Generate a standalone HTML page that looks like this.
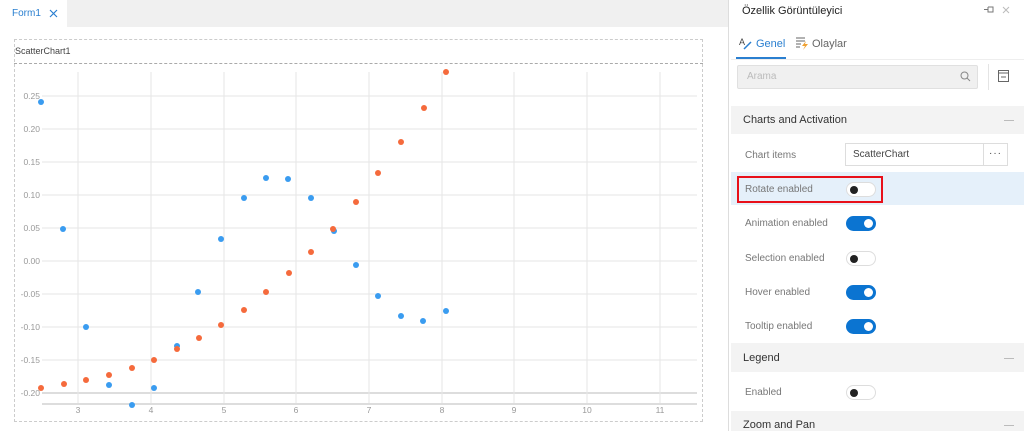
<!DOCTYPE html><html><head><style>
body{margin:0;width:1024px;height:431px;overflow:hidden;background:#fff;font-family:"Liberation Sans",sans-serif;position:relative}
.a{position:absolute}
.lbl{position:absolute;left:745px;font-size:10px;color:#777}
.tg{position:absolute;left:846px;width:30px;height:15px;border-radius:8px;box-sizing:border-box}
.off{border:1px solid #ddd;background:#fff}.off:after{content:"";position:absolute;left:3px;top:3px;width:8px;height:8px;border-radius:50%;background:#222}
.on{background:#0b74d1}.on:after{content:"";position:absolute;right:3px;top:3px;width:9px;height:9px;border-radius:50%;background:#fff}
.sec{position:absolute;left:731px;width:293px;background:#f3f3f3;font-size:11px;color:#333}
.sec span{position:absolute;left:12px}
.sec i{position:absolute;right:10px;top:50%;width:10px;border-top:1px solid #bbb}
</style></head><body>
<div class="a" style="left:0;top:0;width:729px;height:27px;background:#f0f0f0"></div>
<div class="a" style="left:0;top:0;width:67px;height:27px;background:#fff"></div>
<div class="a" style="left:12px;top:8px;font-size:10px;color:#2a7fd0">Form1</div>
<svg class="a" style="left:49px;top:9px" width="9" height="9"><path d="M1 1L8 8M8 1L1 8" stroke="#2a7fd0" stroke-width="1.2"/></svg>
<div class="a" style="left:14px;top:39px;width:689px;height:383px;border:1px dashed #ccc;box-sizing:border-box"></div>
<div class="a" style="left:14px;top:63px;width:689px;border-top:1px dashed #aaa"></div>
<div class="a" style="left:15px;top:46px;font-size:9px;color:#444">ScatterChart1</div>
<div class="a" style="left:728px;top:0;width:1px;height:431px;background:#ddd"></div>
<svg class="a" style="left:0;top:0" width="729" height="431">
<g stroke="#e6e6e6" stroke-width="1">
<line x1="42" x2="697" y1="96" y2="96"/><line x1="42" x2="697" y1="129" y2="129"/><line x1="42" x2="697" y1="162" y2="162"/><line x1="42" x2="697" y1="195" y2="195"/><line x1="42" x2="697" y1="228" y2="228"/><line x1="42" x2="697" y1="261" y2="261"/><line x1="42" x2="697" y1="294" y2="294"/><line x1="42" x2="697" y1="327" y2="327"/><line x1="42" x2="697" y1="360" y2="360"/><line x1="42" x2="697" y1="393" y2="393" stroke="#ddd" stroke-width="2"/>
<line x1="78" x2="78" y1="72" y2="404"/><line x1="151" x2="151" y1="72" y2="404"/><line x1="224" x2="224" y1="72" y2="404"/><line x1="296" x2="296" y1="72" y2="404"/><line x1="369" x2="369" y1="72" y2="404"/><line x1="442" x2="442" y1="72" y2="404"/><line x1="514" x2="514" y1="72" y2="404"/><line x1="587" x2="587" y1="72" y2="404"/><line x1="660" x2="660" y1="72" y2="404"/>
<line x1="42" x2="697" y1="404" y2="404" stroke="#ddd" stroke-width="2"/>
</g>
<g font-size="8.5" fill="#999" text-anchor="end" font-family="Liberation Sans">
<text x="40" y="99">0.25</text><text x="40" y="132">0.20</text><text x="40" y="165">0.15</text><text x="40" y="198">0.10</text><text x="40" y="231">0.05</text><text x="40" y="264">0.00</text><text x="40" y="297">-0.05</text><text x="40" y="330">-0.10</text><text x="40" y="363">-0.15</text><text x="40" y="396">-0.20</text></g>
<g font-size="8.5" fill="#999" text-anchor="middle" font-family="Liberation Sans">
<text x="78" y="413">3</text><text x="151" y="413">4</text><text x="224" y="413">5</text><text x="296" y="413">6</text><text x="369" y="413">7</text><text x="442" y="413">8</text><text x="514" y="413">9</text><text x="587" y="413">10</text><text x="660" y="413">11</text></g>
<g fill="#3a9cf0">
<circle cx="41" cy="102" r="3"/><circle cx="63" cy="229" r="3"/><circle cx="86" cy="327" r="3"/><circle cx="109" cy="385" r="3"/><circle cx="132" cy="405" r="3"/><circle cx="154" cy="388" r="3"/><circle cx="177" cy="346" r="3"/><circle cx="198" cy="292" r="3"/><circle cx="221" cy="239" r="3"/><circle cx="244" cy="198" r="3"/><circle cx="266" cy="178" r="3"/><circle cx="288" cy="179" r="3"/><circle cx="311" cy="198" r="3"/><circle cx="334" cy="231" r="3"/><circle cx="356" cy="265" r="3"/><circle cx="378" cy="296" r="3"/><circle cx="401" cy="316" r="3"/><circle cx="423" cy="321" r="3"/><circle cx="446" cy="311" r="3"/></g>
<g fill="#f56a3c">
<circle cx="41" cy="388" r="3"/><circle cx="64" cy="384" r="3"/><circle cx="86" cy="380" r="3"/><circle cx="109" cy="375" r="3"/><circle cx="132" cy="368" r="3"/><circle cx="154" cy="360" r="3"/><circle cx="177" cy="349" r="3"/><circle cx="199" cy="338" r="3"/><circle cx="221" cy="325" r="3"/><circle cx="244" cy="310" r="3"/><circle cx="266" cy="292" r="3"/><circle cx="289" cy="273" r="3"/><circle cx="311" cy="252" r="3"/><circle cx="333" cy="229" r="3"/><circle cx="356" cy="202" r="3"/><circle cx="378" cy="173" r="3"/><circle cx="401" cy="142" r="3"/><circle cx="424" cy="108" r="3"/><circle cx="446" cy="72" r="3"/></g>
</svg>
<div class="a" style="left:742px;top:5px;font-size:11px;color:#222">Özellik Görüntüleyici</div>
<svg class="a" style="left:983px;top:5px" width="12" height="9"><path d="M1 4.5H5M5 2V7H10V2H5" stroke="#777" fill="none"/></svg>
<svg class="a" style="left:1002px;top:6px" width="8" height="8"><path d="M1 1L7 7M7 1L1 7" stroke="#bbb"/></svg>
<svg class="a" style="left:739px;top:36px" width="14" height="14"><text x="0" y="9" font-size="9" fill="#444" font-family="Liberation Sans">A</text><path d="M5 13L12 6" stroke="#2a7fd0" stroke-width="1.5"/></svg>
<div class="a" style="left:756px;top:38px;font-size:11px;color:#2a7fd0">Genel</div>
<svg class="a" style="left:795px;top:36px" width="14" height="14"><path d="M1 2H10M1 5H10M1 8H6M1 11H5" stroke="#666"/><path d="M11 5L7 10H10L8 14L13 8H10Z" fill="#f0a030"/></svg>
<div class="a" style="left:812px;top:38px;font-size:11px;color:#666">Olaylar</div>
<div class="a" style="left:736px;top:57px;width:50px;height:2px;background:#2a7fd0"></div>
<div class="a" style="left:731px;top:59px;width:293px;height:1px;background:#eee"></div>
<div class="a" style="left:737px;top:65px;width:241px;height:24px;background:#f0f0f0;border:1px solid #e0e0e0;border-radius:2px;box-sizing:border-box"></div>
<div class="a" style="left:747px;top:71px;font-size:10px;color:#bbb">Arama</div>
<svg class="a" style="left:960px;top:71px" width="11" height="11"><circle cx="4.5" cy="4.5" r="3.5" stroke="#888" fill="none"/><path d="M7 7L10 10" stroke="#888"/></svg>
<div class="a" style="left:988px;top:64px;width:1px;height:26px;background:#e4e4e4"></div>
<svg class="a" style="left:998px;top:70px" width="12" height="13"><rect x="0.5" y="0.5" width="10" height="11" stroke="#666" fill="none"/><path d="M0.5 3H10.5M3 7H8" stroke="#666"/></svg>
<div class="sec" style="top:106px;height:28px"><span style="top:8px">Charts and Activation</span><i></i></div>
<div class="lbl" style="top:150px">Chart items</div>
<div class="a" style="left:845px;top:143px;width:163px;height:23px;border:1px solid #ddd;box-sizing:border-box"></div>
<div class="a" style="left:983px;top:143px;width:1px;height:23px;background:#ddd"></div>
<div class="a" style="left:853px;top:149px;font-size:10px;color:#444">ScatterChart</div>
<div class="a" style="left:989px;top:148px;font-size:10px;color:#444;letter-spacing:1px">···</div>
<div class="a" style="left:731px;top:172px;width:293px;height:33px;background:#e5f0fa"></div>
<div class="a" style="left:737px;top:176px;width:146px;height:27px;border:2px solid #e8101a;box-sizing:border-box"></div>
<div class="lbl" style="top:184px">Rotate enabled</div>
<div class="tg off" style="top:182px"></div>
<div class="lbl" style="top:218px">Animation enabled</div><div class="tg on" style="top:216px"></div>
<div class="lbl" style="top:253px">Selection enabled</div><div class="tg off" style="top:251px"></div>
<div class="lbl" style="top:287px">Hover enabled</div><div class="tg on" style="top:285px"></div>
<div class="lbl" style="top:321px">Tooltip enabled</div><div class="tg on" style="top:319px"></div>
<div class="sec" style="top:343px;height:29px"><span style="top:9px">Legend</span><i></i></div>
<div class="lbl" style="top:387px">Enabled</div><div class="tg off" style="top:385px"></div>
<div class="sec" style="top:411px;height:20px"><span style="top:8px">Zoom and Pan</span><i style="top:14px"></i></div>
</body></html>
